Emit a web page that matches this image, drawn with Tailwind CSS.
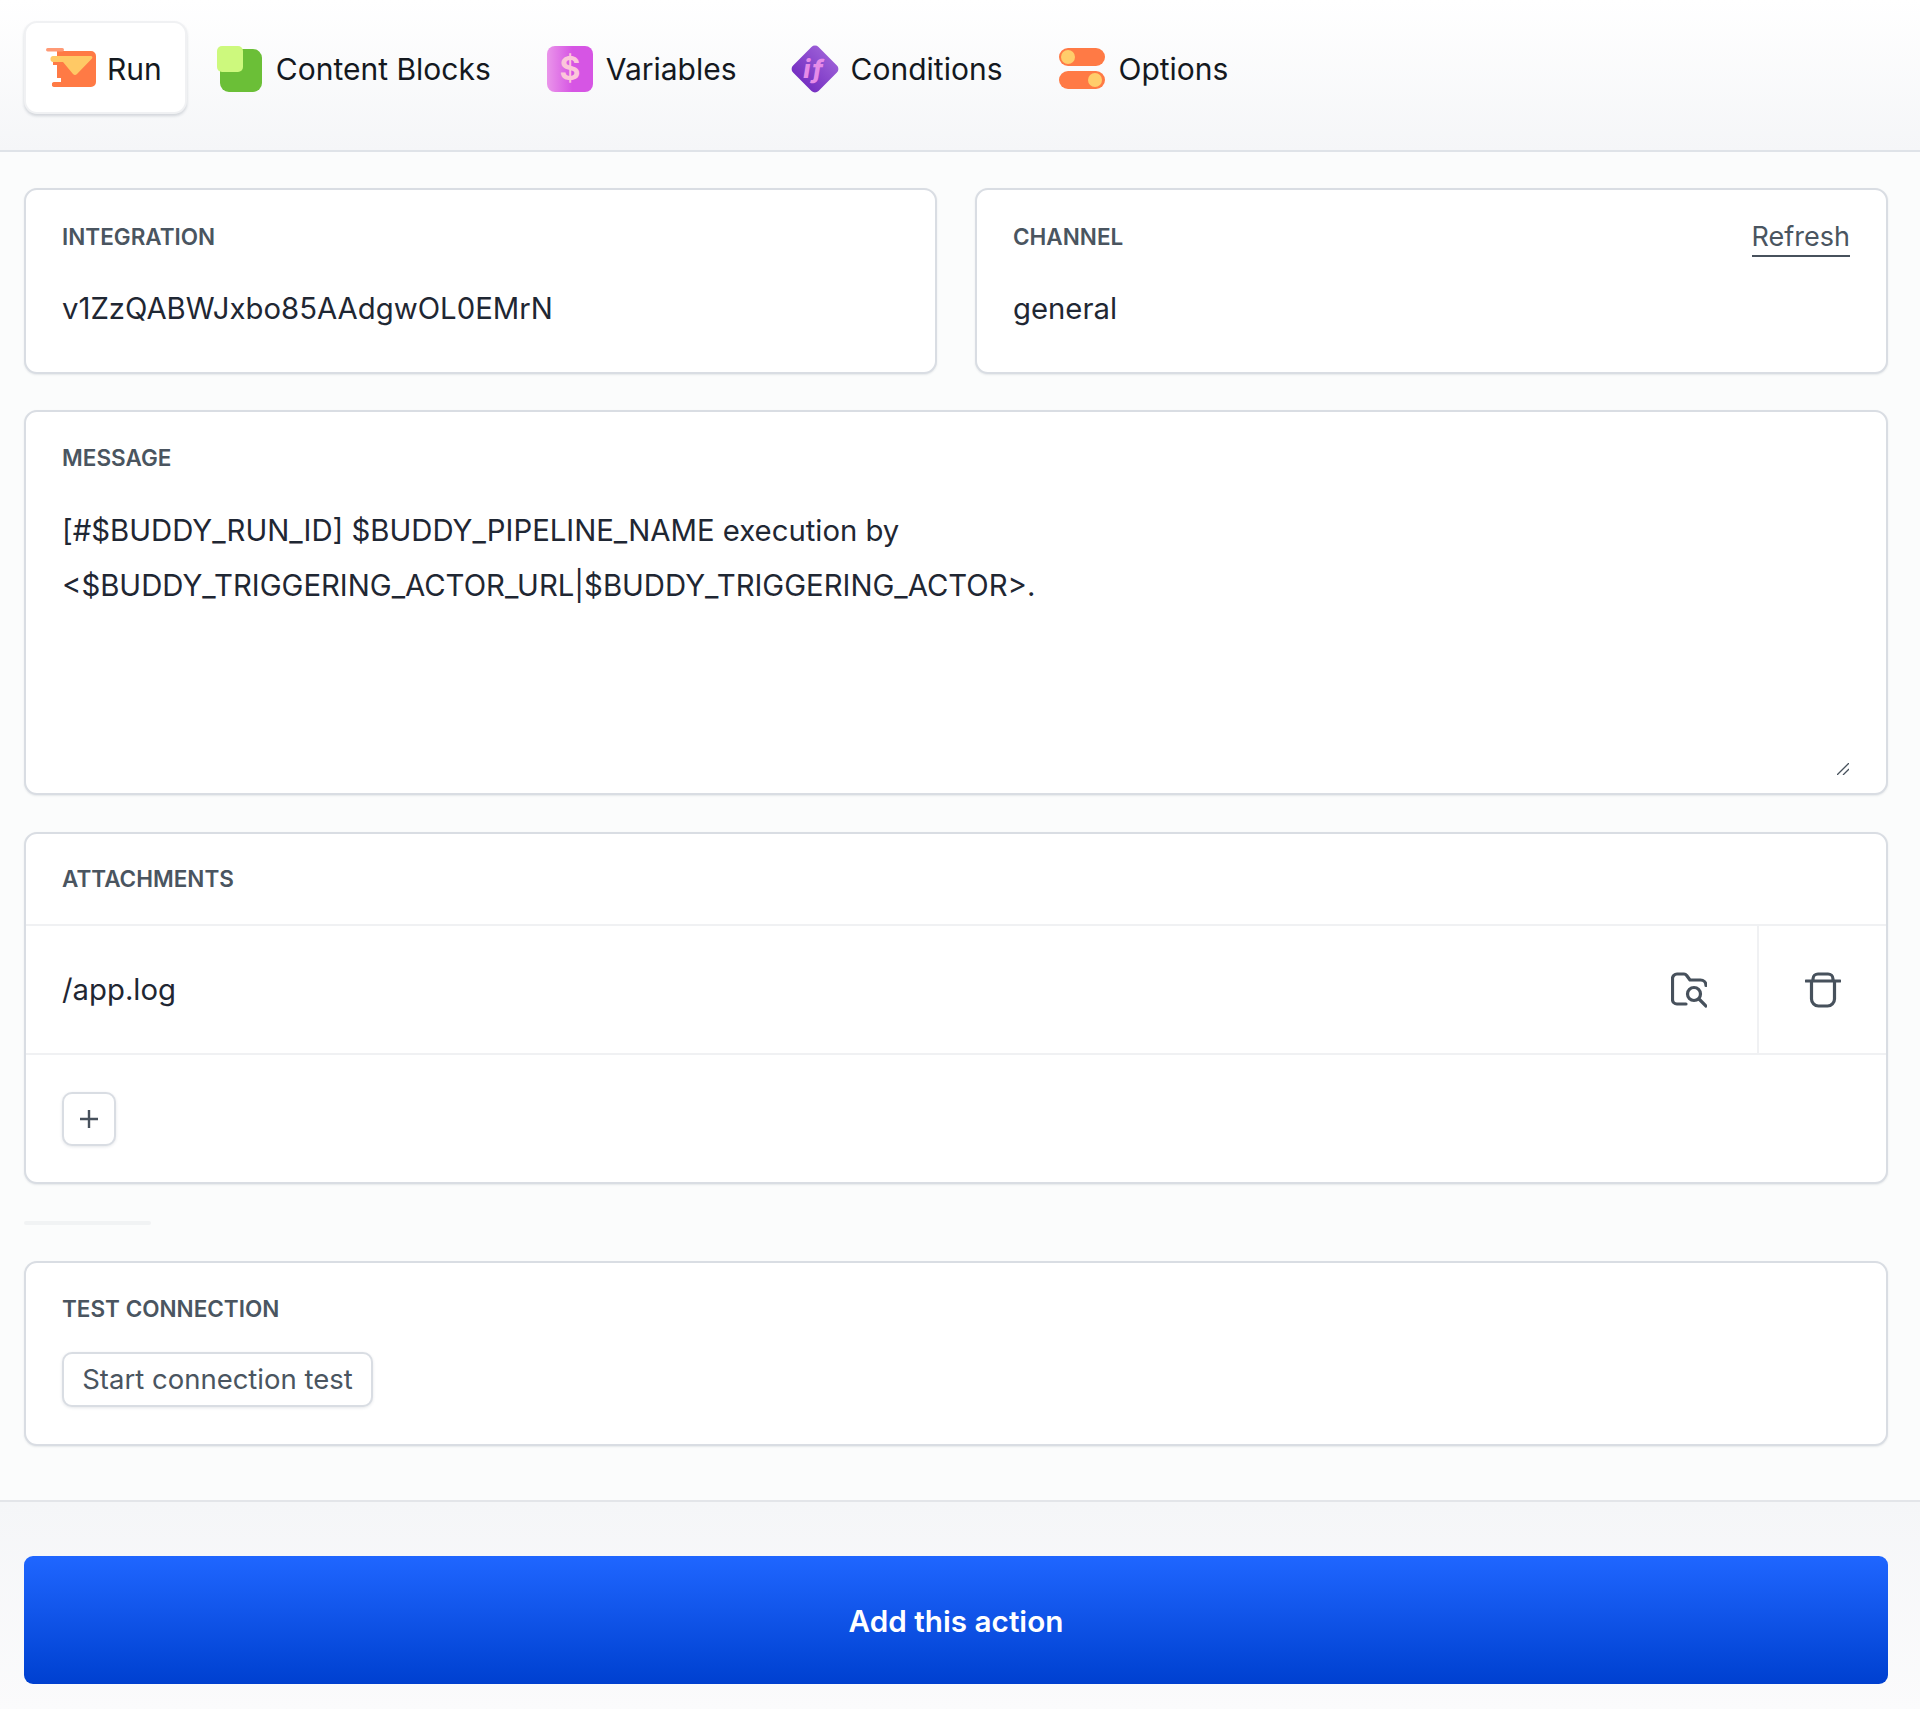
<!DOCTYPE html>
<html lang="en">
<head>
<meta charset="utf-8">
<title>Action</title>
<script src="https://cdn.jsdelivr.net/npm/@tailwindcss/browser@4"></script>
</head>
<body class="bg-[#fbfcfc] font-['Inter',sans-serif] text-[#1f2733]">
<div class="flex h-[1709px] w-[1920px] flex-col overflow-hidden">
  <!-- Tabs -->
  <nav class="flex h-[152px] shrink-0 items-start gap-2 border-b-2 border-[#dfe3e8] bg-gradient-to-b from-white to-[#f5f6f8] pl-6 pt-[21px] text-[30px] text-[#14191f]">
    <div class="flex h-[93px] items-center gap-[11px] rounded-[13px] border-2 border-[#f0f1f3] bg-white pl-[20px] pr-[23px] pt-[4px] shadow-[0_2px_3px_rgba(40,55,80,0.18)]">
      <svg class="mb-[4px] h-[39px] w-[50px]" viewBox="0 0 50 39">
        <path d="M8 3H45a5 5 0 0 1 5 5V34a5 5 0 0 1-5 5H8a2 2 0 0 1-2-2.500 2 2 0 0 1 2-2.500H15V30H11V3Z" fill="#ff7a45"/>
        <rect x="0" y="0" width="18" height="3.500" rx="1.700" fill="#ff9a76"/>
        <path d="M7 8H45a1.500 1.500 0 0 1 1 2.500L31 26a3 3 0 0 1-4 0L17 14H7a2.500 2.500 0 0 1-2.500-3A2.500 2.500 0 0 1 7 8Z" fill="#ffc965"/>
        <rect x="7" y="14" width="10" height="3" fill="#ff7a45"/>
      </svg>
      <span>Run</span>
    </div>
    <div class="-ml-[2px] flex h-[93px] items-center gap-[13px] px-6 pt-[4px]">
      <svg class="mb-[1px] h-[46px] w-[46px]" viewBox="0 0 46 46">
        <rect x="3" y="3" width="42" height="43" rx="9" fill="#6bbf37"/>
        <rect x="0" y="0" width="26" height="26" rx="5" fill="#cdf97d"/>
      </svg>
      <span>Content Blocks</span>
    </div>
    <div class="flex h-[93px] items-center gap-[13px] px-6 pt-[4px]">
      <svg class="mb-[1px] h-[46px] w-[46px]" viewBox="0 0 46 46">
        <defs><linearGradient id="vg" x1="0" x2="1" y1="0" y2="0"><stop offset="0" stop-color="#ea95ea"/><stop offset="0.55" stop-color="#d655e4"/></linearGradient></defs>
        <rect width="46" height="46" rx="8" fill="url(#vg)"/>
        <text x="23" y="34" text-anchor="middle" font-family="Inter" font-weight="700" font-size="32" fill="#fcc6da">$</text>
      </svg>
      <span>Variables</span>
    </div>
    <div class="-ml-[3px] flex h-[93px] items-center gap-[11px] px-6 pt-[4px]">
      <svg class="mb-[1px] h-[50px] w-[50px]" viewBox="0 0 50 50">
        <defs><linearGradient id="cg" x1="0" x2="0" y1="0" y2="1"><stop offset="0" stop-color="#9a5cd6"/><stop offset="1" stop-color="#7630c2"/></linearGradient></defs>
        <rect x="7" y="7" width="36" height="36" rx="5" transform="rotate(45 25 25)" fill="url(#cg)"/>
        <text x="24" y="34" text-anchor="middle" font-family="Inter" font-style="italic" font-weight="800" font-size="25" letter-spacing="2" fill="#e68ce8">if</text>
      </svg>
      <span>Conditions</span>
    </div>
    <div class="ml-[1px] flex h-[93px] items-center gap-[13px] px-6 pt-[4px]">
      <svg class="mb-[1px] h-[42px] w-[46px]" viewBox="0 0 46 42">
        <rect x="0" y="0" width="46" height="18" rx="9" fill="#ff7a45"/>
        <circle cx="9" cy="9" r="7" fill="#ffcd6b"/>
        <rect x="0" y="23" width="46" height="18" rx="9" fill="#ff7a45"/>
        <circle cx="36" cy="32" r="7" fill="#ffcd6b"/>
      </svg>
      <span>Options</span>
    </div>
  </nav>

  <!-- Form -->
  <main class="flex flex-col gap-[37px] pb-[54px] pl-6 pr-8 pt-[36px]">
    <div class="-mb-px flex gap-[38px]">
      <section class="h-[186px] flex-1 rounded-[13px] border-2 border-[#d9dde3] bg-white px-9 pt-[30px] shadow-[0_1px_2px_rgba(40,55,80,0.1)]">
        <div class="text-[22.500px] font-semibold leading-[34px] text-[#4a5560]">INTEGRATION</div>
        <div class="mt-[33px] text-[29.300px] leading-[44px] text-[#1f2733]">v1ZzQABWJxbo85AAdgwOL0EMrN</div>
      </section>
      <section class="h-[186px] flex-1 rounded-[13px] border-2 border-[#d9dde3] bg-white px-9 pt-[30px] shadow-[0_1px_2px_rgba(40,55,80,0.1)]">
        <div class="flex items-start justify-between">
          <div class="text-[22.500px] font-semibold leading-[34px] text-[#4a5560]">CHANNEL</div>
          <div class="-mt-[1px] border-b-2 border-[#47515c] text-[27px] leading-[36px] text-[#4a5560]">Refresh</div>
        </div>
        <div class="mt-[30px] text-[29.300px] leading-[44px] text-[#1f2733]">general</div>
      </section>
    </div>

    <section class="relative h-[385px] rounded-[13px] border-2 border-[#d9dde3] bg-white px-9 pt-[29px] shadow-[0_1px_2px_rgba(40,55,80,0.1)]">
      <div class="text-[22.500px] font-semibold leading-[34px] text-[#4a5560]">MESSAGE</div>
      <div class="mt-[28px] text-[29.300px] leading-[55px] text-[#1f2733]">[#$BUDDY_RUN_ID] $BUDDY_PIPELINE_NAME execution by<br>&lt;$BUDDY_TRIGGERING_ACTOR_URL|$BUDDY_TRIGGERING_ACTOR&gt;.</div>
      <svg class="absolute bottom-[18px] right-[37px] h-3 w-3" viewBox="0 0 12 12" fill="none" stroke="#47515c" stroke-width="1.300"><path d="M0 12 12 0M6 12 12 6"/></svg>
    </section>

    <section class="rounded-[13px] border-2 border-[#d9dde3] bg-white shadow-[0_1px_2px_rgba(40,55,80,0.1)]">
      <div class="h-[90px] px-9 pt-[28px] text-[22.500px] font-semibold leading-[34px] text-[#4a5560]">ATTACHMENTS</div>
      <div class="flex h-[131px] items-stretch border-y-2 border-[#f0f1f3]">
        <div class="flex flex-1 items-center justify-between px-9 pr-[50px]">
          <span class="text-[29.300px] text-[#1f2733]">/app.log</span>
          <svg class="h-9 w-9" viewBox="0 0 36 36" fill="none" stroke="#47515c" stroke-width="3.200" stroke-linecap="round" stroke-linejoin="round"><path d="M15 32H6a4.500 4.500 0 0 1-4.500-4.500V6.500A4.500 4.500 0 0 1 6 2h7a3 3 0 0 1 2.500 1.300L19 8h10.500a5.500 5.500 0 0 1 5.500 5.500"/><circle cx="23" cy="22" r="6.500"/><path d="M28 27 35 34"/></svg>
        </div>
        <div class="flex w-[129px] items-center justify-center border-l-2 border-[#f0f1f3]">
          <svg class="h-9 w-9" viewBox="0 0 36 36" fill="none" stroke="#47515c" stroke-width="3.200" stroke-linecap="round" stroke-linejoin="round"><path d="M1 9H35M8 9V7a5 5 0 0 1 5-5h10a5 5 0 0 1 5 5v2M6.500 9V27a7 7 0 0 0 7 7h9a7 7 0 0 0 7-7V9"/></svg>
        </div>
      </div>
      <div class="h-[127px] pl-9 pt-[37px]">
        <button class="flex h-[54px] w-[54px] items-center justify-center rounded-[10px] border-2 border-[#d9dde3] bg-white shadow-[0_1px_3px_rgba(40,55,80,0.12)]">
          <svg class="h-5 w-5" viewBox="0 0 20 20" fill="none" stroke="#47515c" stroke-width="2.400"><path d="M10 1V19M1 10H19"/></svg>
        </button>
      </div>
    </section>

    <div class="h-1 w-[127px] rounded-sm bg-[#f1f3f4]"></div>

    <section class="-mt-px h-[185px] rounded-[13px] border-2 border-[#d9dde3] bg-white px-9 pt-[29px] shadow-[0_1px_2px_rgba(40,55,80,0.1)]">
      <div class="text-[22.500px] font-semibold leading-[34px] text-[#4a5560]">TEST CONNECTION</div>
      <button class="mt-[26px] flex h-[55px] w-[311px] items-center justify-center rounded-[10px] border-2 border-[#d9dde3] bg-white text-[27.500px] text-[#4a5560] shadow-[0_1px_3px_rgba(40,55,80,0.12)]">Start connection test</button>
    </section>
  </main>

  <!-- Footer -->
  <footer class="flex-1 border-t-2 border-[#e3e5e9] bg-gradient-to-b from-[#f5f6f8] to-[#fbfbfc] pb-[26px] pl-6 pr-8 pt-[54px]">
    <button class="flex h-[128px] w-full items-center justify-center rounded-[9px] bg-gradient-to-b from-[#1f66ff] to-[#0040d0] pt-[2px] text-[29.700px] font-semibold text-white">Add this action</button>
  </footer>
</div>
</body>
</html>
